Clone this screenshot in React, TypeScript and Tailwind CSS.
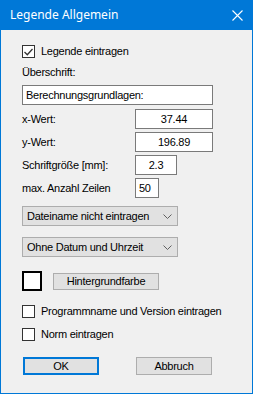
const ui = "font-['Liberation_Sans',Arial,sans-serif] text-[11px] tracking-[-0.25px] text-black";

function Check({ checked, label }: { checked?: boolean; label: string }) {
  return (
    <div className="flex h-[13px] items-center gap-[6px]">
      <span className="flex h-[13px] w-[13px] items-center justify-center border border-[#333] bg-white">
        {checked && (
          <svg width="9" height="8" viewBox="0 0 9 8">
            <path d="M0.5 4 L3.3 6.8 L8.5 1" fill="none" stroke="#333" strokeWidth="1.3" />
          </svg>
        )}
      </span>
      <span className="leading-[13px]">{label}</span>
    </div>
  );
}

function Field({ label, value, width, align = "center" }: { label: string; value: string; width: string; align?: "center" | "left" }) {
  return (
    <div className="flex h-[20px] items-center">
      <span className="w-[113px] leading-[13px]">{label}</span>
      <div
        className={`flex h-[20px] items-center border border-[#7a7a7a] bg-white ${width} ${
          align === "center" ? "justify-center" : "justify-start pl-[3px]"
        }`}
      >
        {value}
      </div>
    </div>
  );
}

function Select({ value }: { value: string }) {
  return (
    <div className="flex h-[20px] w-[156px] items-center justify-between border border-[#adadad] bg-[#e1e1e1] pl-[4px] pr-[5px]">
      <span>{value}</span>
      <svg width="9" height="5" viewBox="0 0 9 5">
        <path d="M0.5 0.5 L4.5 4.5 L8.5 0.5" fill="none" stroke="#606060" strokeWidth="1" />
      </svg>
    </div>
  );
}

export default function App() {
  return (
    <div className={`flex h-[394px] w-[253px] flex-col border-x border-b border-[#0078d7] bg-[#f0f0f0] ${ui}`}>
      {/* Title bar */}
      <div className="flex h-[30px] shrink-0 items-center justify-between bg-[#0078d7] pl-[9px] pr-[9px] tracking-normal text-white">
        <span className="font-['Noto_Sans',sans-serif] text-[12px]">Legende Allgemein</span>
        <svg width="11" height="11" viewBox="0 0 11 11">
          <path d="M0.5 0.5 L10.5 10.5 M10.5 0.5 L0.5 10.5" stroke="white" strokeWidth="1.1" />
        </svg>
      </div>

      <div className="flex flex-col pl-[21px]">
        <div className="mt-[15px]">
          <Check checked label="Legende eintragen" />
        </div>
        <div className="mt-[8px] leading-[13px]">Überschrift:</div>
        <div className="mt-[6px] flex h-[20px] w-[191px] items-center border border-[#7a7a7a] bg-white pl-[3px]">
          Berechnungsgrundlagen:
        </div>

        <div className="mt-[4px] flex flex-col gap-[3px]">
          <Field label="x-Wert:" value="37.44" width="w-[78px]" />
          <Field label="y-Wert:" value="196.89" width="w-[78px]" />
          <Field label="Schriftgröße [mm]:" value="2.3" width="w-[42px]" />
          <Field label="max. Anzahl Zeilen" value="50" width="w-[24px]" align="left" />
        </div>

        <div className="mt-[8px] flex flex-col gap-[11px]">
          <Select value="Dateiname nicht eintragen" />
          <Select value="Ohne Datum und Uhrzeit" />
        </div>

        <div className="mt-[14px] flex h-[20px] items-center gap-[11px]">
          <span className="h-[20px] w-[20px] border-2 border-black bg-white" />
          <button className="flex h-[17px] w-[106px] items-center justify-center border border-[#adadad] bg-[#e1e1e1]">
            Hintergrundfarbe
          </button>
        </div>

        <div className="mt-[14px] flex flex-col gap-[10px]">
          <Check label="Programmname und Version eintragen" />
          <Check label="Norm eintragen" />
        </div>

        <div className="mt-[16px] flex h-[18px] items-center">
          <button className="ml-[1px] flex h-[18px] w-[76px] items-center justify-center border-2 border-[#0078d7] bg-[#e1e1e1]">
            OK
          </button>
          <button className="ml-[37px] flex h-[18px] w-[76px] items-center justify-center border border-[#adadad] bg-[#e1e1e1]">
            Abbruch
          </button>
        </div>
      </div>
    </div>
  );
}
